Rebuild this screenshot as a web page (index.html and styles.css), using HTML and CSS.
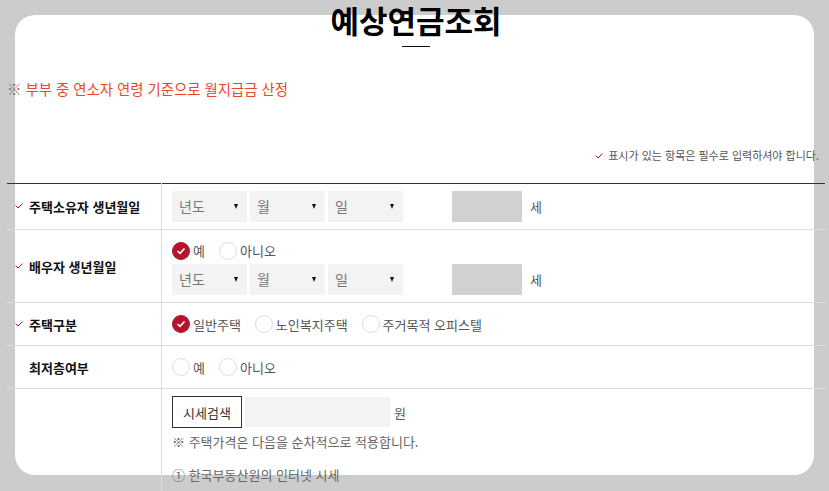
FILE: index.html
```html
<!DOCTYPE html>
<html lang="ko">
<head>
<meta charset="utf-8">
<title>예상연금조회</title>
<link rel="stylesheet" href="styles.css">
</head>
<body>
<div class="card">
  <div class="content">
    <h1 class="title">예상연금조회</h1>
    <div class="title-bar"></div>
    <p class="notice"><span class="mark">※</span> 부부 중 연소자 연령 기준으로 월지급금 산정</p>
    <p class="required"><svg class="req-icon" width="8" height="6" viewBox="0 0 8 6"><path d="M0.5 2.5 L3 5 L7.5 0.5" fill="none" stroke="#c8102e" stroke-width="1"/></svg> 표시가 있는 항목은 필수로 입력하셔야 합니다.</p>
    <table class="form">
      <tr class="r1">
        <th><svg class="req-icon" width="8" height="6" viewBox="0 0 8 6"><path d="M0.5 2.5 L3 5 L7.5 0.5" fill="none" stroke="#c8102e" stroke-width="1"/></svg><span>주택소유자 생년월일</span></th>
        <td>
          <div class="date-row">
            <div class="select">년도<i class="arrow"></i></div>
            <div class="select">월<i class="arrow"></i></div>
            <div class="select">일<i class="arrow"></i></div>
            <div class="age"></div>
            <span class="unit">세</span>
          </div>
        </td>
      </tr>
      <tr class="r2">
        <th><svg class="req-icon" width="8" height="6" viewBox="0 0 8 6"><path d="M0.5 2.5 L3 5 L7.5 0.5" fill="none" stroke="#c8102e" stroke-width="1"/></svg><span>배우자 생년월일</span></th>
        <td>
          <div class="radios">
            <label class="radio-item"><span class="radio checked"><svg width="10" height="8" viewBox="0 0 10 8"><path d="M1.5 4 L4 6.3 L8.5 1.5" fill="none" stroke="#fff" stroke-width="1.6"/></svg></span>예</label>
            <label class="radio-item"><span class="radio"></span>아니오</label>
          </div>
          <div class="date-row">
            <div class="select">년도<i class="arrow"></i></div>
            <div class="select">월<i class="arrow"></i></div>
            <div class="select">일<i class="arrow"></i></div>
            <div class="age"></div>
            <span class="unit">세</span>
          </div>
        </td>
      </tr>
      <tr class="r3">
        <th><svg class="req-icon" width="8" height="6" viewBox="0 0 8 6"><path d="M0.5 2.5 L3 5 L7.5 0.5" fill="none" stroke="#c8102e" stroke-width="1"/></svg><span>주택구분</span></th>
        <td>
          <div class="radios">
            <label class="radio-item"><span class="radio checked"><svg width="10" height="8" viewBox="0 0 10 8"><path d="M1.5 4 L4 6.3 L8.5 1.5" fill="none" stroke="#fff" stroke-width="1.6"/></svg></span>일반주택</label>
            <label class="radio-item"><span class="radio"></span>노인복지주택</label>
            <label class="radio-item"><span class="radio"></span>주거목적 오피스텔</label>
          </div>
        </td>
      </tr>
      <tr class="r4">
        <th><span class="no-icon"></span><span>최저층여부</span></th>
        <td>
          <div class="radios">
            <label class="radio-item"><span class="radio"></span>예</label>
            <label class="radio-item"><span class="radio"></span>아니오</label>
          </div>
        </td>
      </tr>
      <tr class="r5">
        <th></th>
        <td>
          <div class="price-row">
            <button class="search-btn" type="button">시세검색</button>
            <div class="price-input"></div>
            <span class="unit">원</span>
          </div>
          <p class="help">※ 주택가격은 다음을 순차적으로 적용합니다.</p>
          <p class="help step">① 한국부동산원의 인터넷 시세</p>
        </td>
      </tr>
    </table>
  </div>
</div>
</body>
</html>
```

FILE: styles.css
```css
html, body {
  margin: 0;
  padding: 0;
}
body {
  background: #cccccc;
  font-family: "Noto Sans CJK KR", "Noto Sans", sans-serif;
  color: #333;
  overflow: hidden;
  height: 491px;
}
.card {
  display: flow-root;
  margin: 15px 15px 0;
  height: 460px;
  background: #fff;
  border-radius: 20px;
}
.content {
  margin: -15px -11px 0 -8px;
}
.title {
  margin: 0;
  height: 40px;
  line-height: 40px;
  font-size: 31px;
  font-weight: 700;
  letter-spacing: 0;
  color: #000;
  text-align: center;
}
.title-bar {
  width: 28px;
  height: 1px;
  background: #111;
  margin: 6px auto 0;
}
.notice {
  margin: 32px 0 0;
  font-size: 14.4px;
  line-height: 20px;
  color: #e9472a;
}
.notice .mark {
  color: #777;
}
.required {
  margin: 48px 0 0;
  padding-right: 6px;
  text-align: right;
  font-size: 11px;
  line-height: 16px;
  color: #555;
}
.required .req-icon {
  vertical-align: 1px;
  margin-right: 2px;
}
.form {
  margin-top: 20px;
  width: 818px;
  border-collapse: collapse;
  border-top: 1px solid #333;
}
.form th {
  width: 146px;
  padding: 0 0 0 8px;
  text-align: left;
  vertical-align: middle;
  font-size: 13px;
  font-weight: 700;
  color: #111;
  border-right: 1px solid #ddd;
  border-bottom: 1px solid #ddd;
  white-space: nowrap;
}
.form th .req-icon,
.form th .no-icon {
  display: inline-block;
  width: 8px;
  margin-right: 6px;
  vertical-align: 3px;
}
.form td {
  padding: 7px 10px;
  border-bottom: 1px solid #ddd;
  font-size: 13px;
  color: #555;
}
.date-row {
  display: flex;
  align-items: center;
  height: 31px;
}
.select {
  position: relative;
  box-sizing: border-box;
  width: 75px;
  height: 31px;
  margin-right: 3px;
  padding-left: 7px;
  background: #f3f3f3;
  color: #777;
  font-size: 14px;
  line-height: 31px;
}
.arrow {
  position: absolute;
  right: 9px;
  top: 13px;
  width: 0;
  height: 0;
  border-left: 2.5px solid transparent;
  border-right: 2.5px solid transparent;
  border-top: 5px solid #111;
}
.age {
  width: 70px;
  height: 31px;
  margin-left: 46px;
  background: #d1d1d1;
}
.unit {
  margin-left: 8px;
  color: #555;
  font-size: 13px;
}
.radios {
  display: flex;
  align-items: center;
  height: 28px;
}
.r2 .radios {
  height: 27px;
}
.radio-item {
  display: flex;
  align-items: center;
  margin-right: 14px;
  color: #555;
}
.radio {
  box-sizing: border-box;
  width: 18px;
  height: 18px;
  margin-right: 3px;
  border-radius: 50%;
  border: 1px solid #ddd;
  background: #fff;
  display: flex;
  align-items: center;
  justify-content: center;
}
.radio.checked {
  background: #b3162a;
  border-color: #b3162a;
}
.price-row {
  display: flex;
  align-items: center;
  height: 32px;
}
.search-btn {
  box-sizing: border-box;
  width: 70px;
  height: 32px;
  padding: 0;
  border: 1px solid #333;
  background: #fff;
  color: #333;
  font-family: inherit;
  font-size: 13px;
}
.price-input {
  width: 145px;
  height: 30px;
  margin-left: 3px;
  background: #f3f3f3;
}
.price-row .unit {
  margin-left: 4px;
}
.help {
  margin: 4px 0 0;
  line-height: 20px;
  color: #666;
}
.help.step {
  margin-top: 13px;
  padding-bottom: 30px;
}
```
